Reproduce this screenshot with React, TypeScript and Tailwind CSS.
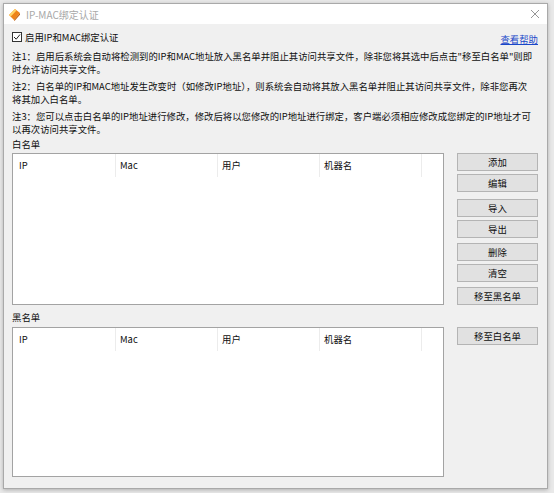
import React from 'react';

const cols = ['IP', 'Mac', '用户', '机器名'];

function ListBox({ height }: { height: string }) {
  return (
    <div className={`w-[432px] ${height} bg-white border border-[#a3a3a3]`}>
      <div className="flex h-[23px] items-center">
        {cols.map((c, i) => (
          <div
            key={c}
            className={`h-full flex items-center border-r border-[#ececec] ${
              i === 0 ? 'w-[103px] pl-[6px]' : 'w-[102px] pl-[4px]'
            }`}
          >
            {c}
          </div>
        ))}
      </div>
    </div>
  );
}

function Btn({ label, className = '' }: { label: string; className?: string }) {
  return (
    <div
      className={`w-[81px] h-[18px] flex items-center justify-center bg-[#e1e1e1] border border-[#b4b4b4] ${className}`}
    >
      {label}
    </div>
  );
}

export default function App() {
  return (
    <div className="w-[554px] h-[493px] bg-[#e9e9e9] pt-[3px] pl-[3px] overflow-hidden font-['Noto_Sans_CJK_SC',sans-serif] text-[9.4px] leading-[13px] text-[#0f0f0f]">
      <div className="w-[545px] h-[486px] bg-[#f0f0f0] border border-[#a9a9a9] shadow-[0_1px_4px_rgba(0,0,0,0.25)] flex flex-col">
        {/* title bar */}
        <div className="h-[20px] bg-white flex items-center pl-[3px] pr-[7px]">
          <svg width="15" height="15" viewBox="0 0 15 15">
            <polygon points="2,8 8,2 13,6 7,13" fill="#ee8418" />
            <polygon points="2,8 8,2 9.5,3.5 3.8,9.5" fill="#ffd466" />
            <polygon points="7,13 13,6 13,7.8 7.5,14" fill="#bf600e" />
          </svg>
          <span className="ml-[4px] text-[#a8a8a8] text-[10px]">IP-MAC绑定认证</span>
          <svg className="ml-auto" width="10" height="10" viewBox="0 0 10 10">
            <path d="M1 1 L9 9 M9 1 L1 9" stroke="#8a8a8a" strokeWidth="0.9" />
          </svg>
        </div>

        <div className="pl-[8px] pr-[9px] flex flex-col">
          {/* checkbox row */}
          <div className="flex items-start justify-between mt-[6px] h-[14px]">
            <div className="flex items-center h-[14px]">
              <div className="w-[10px] h-[10px] border border-[#333] bg-white flex items-center justify-center">
                <svg width="8" height="8" viewBox="0 0 8 8">
                  <path d="M1 4 L3.2 6.2 L7 1.5" stroke="#222" strokeWidth="1" fill="none" />
                </svg>
              </div>
              <span className="ml-[3px]">启用IP和MAC绑定认证</span>
            </div>
            <span className="mt-[3px] text-[#1a47c9] underline">查看帮助</span>
          </div>

          {/* notes */}
          <div className="mt-[6px] whitespace-nowrap">
            <div>注1：启用后系统会自动将检测到的IP和MAC地址放入黑名单并阻止其访问共享文件，除非您将其选中后点击"移至白名单"则即</div>
            <div>时允许访问共享文件。</div>
          </div>
          <div className="mt-[4px] whitespace-nowrap">
            <div>注2：白名单的IP和MAC地址发生改变时（如修改IP地址），则系统会自动将其放入黑名单并阻止其访问共享文件，除非您再次</div>
            <div>将其加入白名单。</div>
          </div>
          <div className="mt-[4px] whitespace-nowrap">
            <div>注3：您可以点击白名单的IP地址进行修改，修改后将以您修改的IP地址进行绑定，客户端必须相应修改成您绑定的IP地址才可</div>
            <div>以再次访问共享文件。</div>
          </div>

          {/* white list */}
          <div className="mt-[2px]">白名单</div>
          <div className="mt-[2px] flex justify-between">
            <ListBox height="h-[152px]" />
            <div className="flex flex-col">
              <Btn label="添加" />
              <Btn label="编辑" className="mt-[3px]" />
              <Btn label="导入" className="mt-[7px]" />
              <Btn label="导出" className="mt-[3px]" />
              <Btn label="删除" className="mt-[5px]" />
              <Btn label="清空" className="mt-[3px]" />
              <Btn label="移至黑名单" className="mt-[5px]" />
            </div>
          </div>

          {/* black list */}
          <div className="mt-[6px]">黑名单</div>
          <div className="mt-[3px] flex justify-between">
            <ListBox height="h-[150px]" />
            <div className="flex flex-col">
              <Btn label="移至白名单" />
            </div>
          </div>
        </div>
      </div>
    </div>
  );
}
